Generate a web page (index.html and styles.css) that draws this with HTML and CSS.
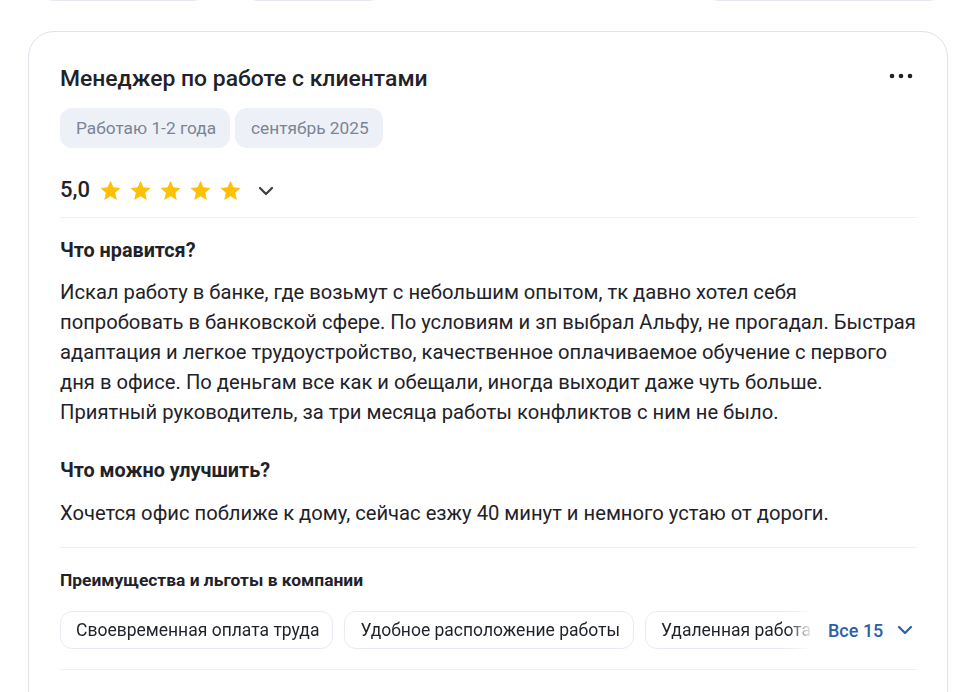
FILE: index.html
```html
<!DOCTYPE html>
<html lang="ru">
<head>
<meta charset="utf-8">
<title>Отзыв</title>
<link rel="stylesheet" href="styles.css">
</head>
<body>
<div class="page">
  <div class="top-row">
    <div class="top-item w1"></div>
    <div class="top-item w2"></div>
    <div class="top-spacer"></div>
    <div class="top-item w3"></div>
  </div>

  <article class="card">
    <header class="card-head">
      <h2 class="title">Менеджер по работе с клиентами</h2>
      <button class="more" aria-label="Ещё">
        <svg width="24" height="6" viewBox="0 0 24 6"><circle cx="3" cy="3" r="2.3" fill="#1f2229"/><circle cx="12" cy="3" r="2.3" fill="#1f2229"/><circle cx="21" cy="3" r="2.3" fill="#1f2229"/></svg>
      </button>
    </header>

    <div class="tags">
      <span class="tag">Работаю 1-2 года</span>
      <span class="tag">сентябрь 2025</span>
    </div>

    <div class="rating">
      <span class="score">5,0</span>
      <span class="stars">
        <svg class="star" viewBox="0 0 24 24"><path d="M12 1.8l3.05 6.9 7.5.72-5.66 5 1.65 7.38L12 17.95 5.46 21.8l1.65-7.38-5.66-5 7.5-.72z" fill="#ffc107"/></svg>
        <svg class="star" viewBox="0 0 24 24"><path d="M12 1.8l3.05 6.9 7.5.72-5.66 5 1.65 7.38L12 17.95 5.46 21.8l1.65-7.38-5.66-5 7.5-.72z" fill="#ffc107"/></svg>
        <svg class="star" viewBox="0 0 24 24"><path d="M12 1.8l3.05 6.9 7.5.72-5.66 5 1.65 7.38L12 17.95 5.46 21.8l1.65-7.38-5.66-5 7.5-.72z" fill="#ffc107"/></svg>
        <svg class="star" viewBox="0 0 24 24"><path d="M12 1.8l3.05 6.9 7.5.72-5.66 5 1.65 7.38L12 17.95 5.46 21.8l1.65-7.38-5.66-5 7.5-.72z" fill="#ffc107"/></svg>
        <svg class="star" viewBox="0 0 24 24"><path d="M12 1.8l3.05 6.9 7.5.72-5.66 5 1.65 7.38L12 17.95 5.46 21.8l1.65-7.38-5.66-5 7.5-.72z" fill="#ffc107"/></svg>
      </span>
      <svg class="chev" width="16" height="10" viewBox="0 0 16 10"><path d="M2 2l6 6 6-6" fill="none" stroke="#3a3d44" stroke-width="2.2" stroke-linecap="round" stroke-linejoin="round"/></svg>
    </div>

    <hr class="sep sep-1">

    <h3 class="q">Что нравится?</h3>
    <p class="answer">Искал работу в банке, где возьмут с небольшим опытом, тк давно хотел себя попробовать в банковской сфере. По условиям и зп выбрал Альфу, не прогадал. Быстрая адаптация и легкое трудоустройство, качественное оплачиваемое обучение с первого дня в офисе. По деньгам все как и обещали, иногда выходит даже чуть больше. Приятный руководитель, за три месяца работы конфликтов с ним не было.</p>

    <h3 class="q q-2">Что можно улучшить?</h3>
    <p class="answer answer-2">Хочется офис поближе к дому, сейчас езжу 40 минут и немного устаю от дороги.</p>

    <hr class="sep sep-2">

    <h4 class="benefits-title">Преимущества и льготы в компании</h4>
    <div class="benefits">
      <div class="chips">
        <span class="chip">Своевременная оплата труда</span>
        <span class="chip">Удобное расположение работы</span>
        <span class="chip">Удаленная работа</span>
      </div>
      <button class="all">
        <span>Все 15</span>
        <svg width="16" height="10" viewBox="0 0 16 10"><path d="M2 2l6 6 6-6" fill="none" stroke="#2d5fa8" stroke-width="2.2" stroke-linecap="round" stroke-linejoin="round"/></svg>
      </button>
    </div>

    <hr class="sep sep-3">
  </article>
</div>
</body>
</html>
```

FILE: styles.css
```css
* { box-sizing: border-box; }

html, body {
  margin: 0;
  padding: 0;
  background: #ffffff;
  font-family: Roboto, "Noto Sans", "Liberation Sans", sans-serif;
  color: #1f2229;
  overflow: hidden;
}

.page {
  width: 968px;
  height: 692px;
  overflow: hidden;
  padding: 0 20px 0 28px;
}

.top-row {
  display: flex;
  height: 1px;
  padding-left: 15px;
  padding-right: 8px;
}

.top-item {
  height: 20px;
  margin-top: -19px;
  border: 1px solid #e6e9f0;
  border-radius: 10px;
}

.w1 { width: 161px; }
.w2 { width: 133px; margin-left: 43px; }
.top-spacer { flex: 1; }
.w3 { width: 232px; }

.card {
  margin-top: 30px;
  width: 920px;
  height: 700px;
  border: 1px solid #dfe3ec;
  border-radius: 26px;
  padding: 33px 30px 0 31px;
}

.card-head {
  display: flex;
  align-items: center;
  justify-content: space-between;
  height: 28px;
}

.title {
  margin: 0;
  font-size: 22.9px;
  font-weight: 500;
  line-height: 28px;
}

.more {
  border: 0;
  background: none;
  padding: 0;
  margin: -6px 4px 0 0;
  display: flex;
  cursor: pointer;
}

.tags {
  display: flex;
  gap: 5px;
  margin-top: 15px;
}

.tag {
  height: 40px;
  padding: 0 14px 0 16px;
  display: flex;
  align-items: center;
  background: #edf0f7;
  border-radius: 12px;
  color: #7b8494;
  font-size: 17.3px;
}

.rating {
  display: flex;
  align-items: center;
  height: 28px;
  margin-top: 28px;
}

.score {
  font-size: 22px;
  font-weight: 500;
  line-height: 28px;
  margin-right: 9px;
}

.stars {
  display: flex;
  gap: 7px;
}

.star {
  width: 23px;
  height: 23px;
  display: block;
}

.chev {
  display: block;
  margin-left: 16px;
  margin-top: 2px;
}

.sep {
  border: 0;
  border-top: 1px solid #eef0f4;
  margin: 0;
}

.sep-1 { margin-top: 13px; }

.q {
  margin: 20px 0 0;
  font-size: 19.8px;
  font-weight: 700;
  line-height: 26px;
}

.q-2 { margin-top: 31px; }

.answer {
  margin: 13px 0 0;
  font-size: 20.2px;
  line-height: 30px;
}

.answer-2 { margin-top: 14px; }

.sep-2 { margin-top: 19px; }

.benefits-title {
  margin: 21px 0 0;
  font-size: 17.4px;
  font-weight: 700;
  line-height: 22px;
}

.benefits {
  display: flex;
  align-items: center;
  margin-top: 20px;
}

.chips {
  display: flex;
  gap: 11px;
  width: 753px;
  flex: none;
  overflow: hidden;
  -webkit-mask-image: linear-gradient(to right, #000 0, #000 728px, transparent 753px);
  mask-image: linear-gradient(to right, #000 0, #000 728px, transparent 753px);
}

.chip {
  flex: none;
  height: 38px;
  padding: 0 13px 0 15px;
  display: flex;
  align-items: center;
  border: 1px solid #e8ebf2;
  border-radius: 12px;
  font-size: 17.5px;
  white-space: nowrap;
}

.all {
  margin-left: 15px;
  border: 0;
  background: none;
  padding: 0;
  display: flex;
  align-items: center;
  gap: 14px;
  color: #2d5fa8;
  font-family: inherit;
  font-size: 18px;
  font-weight: 500;
  cursor: pointer;
}

.sep-3 { margin-top: 20px; }
```
